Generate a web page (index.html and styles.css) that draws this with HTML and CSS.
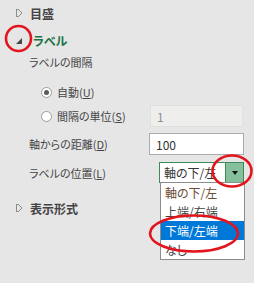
FILE: index.html
```html
<!DOCTYPE html>
<html lang="ja">
<head>
    <meta charset="utf-8">
    <title>軸の書式設定</title>
    <link rel="stylesheet" href="styles.css">
</head>
<body>
    <div class="pane">
        <div class="head head-first">
            <span class="tri tri-closed"></span>
            <span class="head-text">目盛</span>
        </div>
        <div class="head head-open">
            <span class="tri tri-open"></span>
            <span class="head-text green">ラベル</span>
        </div>
        <div class="row sub-title">ラベルの間隔</div>
        <div class="row radio-row auto-row">
            <span class="radio checked"></span>
            <span>自動(<u>U</u>)</span>
        </div>
        <div class="row radio-row unit-row">
            <span class="radio"></span>
            <span>間隔の単位(<u>S</u>)</span>
            <input class="box box-off" type="text" value="1" disabled>
        </div>
        <div class="row dist-row">
            <span>軸からの距離(<u>D</u>)</span>
            <input class="box box-on" type="text" value="100">
        </div>
        <div class="row pos-row">
            <span>ラベルの位置(<u>L</u>)</span>
            <div class="select">
                <span class="select-text">軸の下/左</span>
                <span class="select-btn"><span class="arrow"></span></span>
            </div>
        </div>
        <div class="head head-last">
            <span class="tri tri-closed"></span>
            <span class="head-text">表示形式</span>
        </div>

        <!-- 開いているドロップダウン -->
        <ul class="drop-list">
            <li class="first">軸の下/左</li>
            <li>上端/右端</li>
            <li class="selected">下端/左端</li>
            <li>なし</li>
        </ul>

        <!-- 赤い丸の注釈 -->
        <svg class="marks" width="254" height="283" viewBox="0 0 254 283">
            <circle cx="18.5" cy="38.5" r="12.5" fill="none" stroke="#e3141c" stroke-width="2.6"/>
            <ellipse cx="232" cy="171" rx="19.5" ry="15.5" fill="none" stroke="#e3141c" stroke-width="2.6"/>
            <ellipse cx="194" cy="233.5" rx="44" ry="18" fill="none" stroke="#e3141c" stroke-width="2.6"/>
        </svg>
    </div>
</body>
</html>
```

FILE: styles.css
```css
body {
    margin: 0;
    background-color: #e6e6e6;
    font-family: "Noto Sans CJK JP", "Noto Sans", sans-serif;
    font-feature-settings: "palt";
    font-size: 11px;
    color: #444;
}

.pane {
    position: relative;
    width: 254px;
    height: 283px;
    display: flex;
    flex-direction: column;
}

.head {
    display: flex;
    align-items: center;
    height: 20px;
    padding-left: 16px;
}

.head-first {
    margin-top: 3px;
}

.head-open {
    margin-top: 7px;
}

.head-last {
    margin-top: 15px;
}

.head-text {
    margin-left: 8px;
    font-size: 12px;
    font-weight: bold;
    color: #444;
}

.green {
    color: #217346;
}

.tri {
    display: block;
    width: 7px;
    height: 9px;
}

/* 閉じた三角 */
.tri-closed {
    width: 5px;
    height: 8px;
    border: none;
    background:
        linear-gradient(to top right, transparent 48%, #8a8a8a 49%, #8a8a8a 62%, transparent 63%) top / 5px 4px no-repeat,
        linear-gradient(to bottom right, transparent 48%, #8a8a8a 49%, #8a8a8a 62%, transparent 63%) bottom / 5px 4px no-repeat;
    border-left: 1px solid #8a8a8a;
    margin-left: 0;
}

/* 開いた三角 */
.tri-open {
    width: 0;
    height: 0;
    border-left: 6px solid transparent;
    border-bottom: 6px solid #474747;
    margin-left: 0;
    margin-top: 2px;
}

.tri-open + .head-text {
    margin-left: 11px;
}

.row {
    display: flex;
    align-items: center;
    padding-left: 29px;
    padding-right: 10px;
}

.sub-title {
    height: 20px;
    margin-top: 2px;
}

.radio-row {
    padding-left: 41px;
}

.auto-row {
    height: 20px;
    margin-top: 10px;
}

.unit-row {
    height: 22px;
    margin-top: 3px;
}

.radio {
    box-sizing: border-box;
    width: 11px;
    height: 11px;
    border: 1px solid #9c9c9c;
    border-radius: 50%;
    background-color: #fff;
    margin-right: 5px;
    display: flex;
    align-items: center;
    justify-content: center;
}

.radio.checked::after {
    content: "";
    width: 5px;
    height: 5px;
    border-radius: 50%;
    background-color: #5a5a5a;
}

.box {
    box-sizing: border-box;
    margin-left: auto;
    height: 22px;
    padding: 0 6px;
    font-family: inherit;
    font-size: 12px;
    outline: none;
}

.box-off {
    width: 93px;
    margin-right: 1px;
    background-color: #eeeeec;
    border: 1px solid #e0e0de;
    color: #8f8f8f;
}

.box-on {
    width: 95px;
    background-color: #fff;
    border: 1px solid #ababab;
    color: #333;
}

.dist-row {
    height: 22px;
    margin-top: 6px;
}

.pos-row {
    height: 21px;
    margin-top: 7px;
}

.select {
    box-sizing: border-box;
    margin-left: auto;
    width: 85px;
    height: 21px;
    display: flex;
    align-items: center;
    background-color: #fff;
    border: 1px solid #3f8a5c;
}

.select-text {
    flex: 1;
    padding-left: 4px;
    font-size: 12px;
    color: #333;
}

.select-btn {
    box-sizing: border-box;
    width: 18px;
    height: 100%;
    background-color: #86bf9b;
    border-left: 1px solid #3f8a5c;
    display: flex;
    align-items: center;
    justify-content: center;
}

.arrow {
    width: 0;
    height: 0;
    border-left: 3.5px solid transparent;
    border-right: 3.5px solid transparent;
    border-top: 4px solid #111;
}

.drop-list {
    position: absolute;
    left: 160px;
    top: 182px;
    box-sizing: border-box;
    width: 85px;
    margin: 0;
    padding: 0;
    list-style: none;
    background-color: #fff;
    border: 1px solid #8c8c8c;
    font-size: 12px;
}

.drop-list li {
    height: 19px;
    line-height: 19px;
    padding-left: 4px;
    color: #444;
}

.drop-list li.first {
    color: #6b4a33;
}

.drop-list li.selected {
    background-color: #0078d7;
    color: #fff;
}

.marks {
    position: absolute;
    left: 0;
    top: 0;
    pointer-events: none;
}
```
